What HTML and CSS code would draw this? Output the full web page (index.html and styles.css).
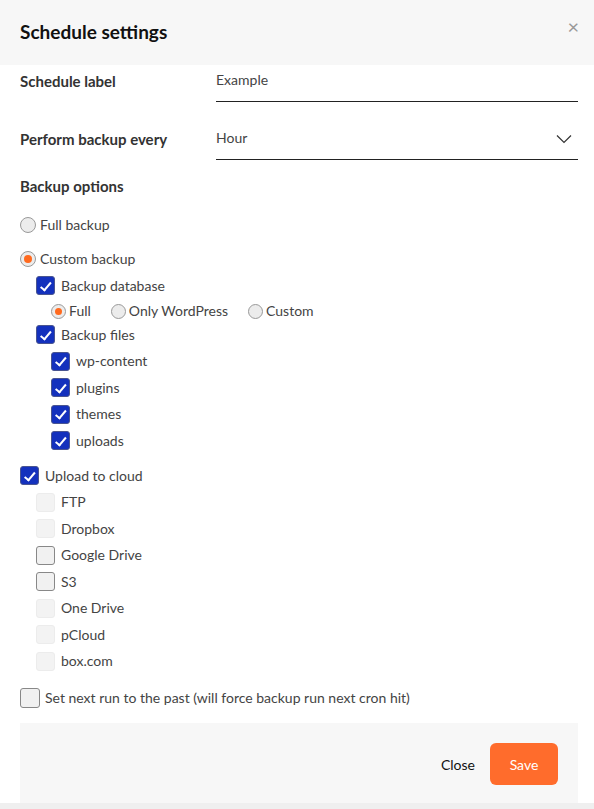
FILE: index.html
```html
<!DOCTYPE html>
<html>
<head>
<meta charset="utf-8">
<link rel="stylesheet" href="styles.css">
</head>
<body>
<div class="modal">
  <div class="header">
    <h1 class="title">Schedule settings</h1>
    <span class="close-x">&#215;</span>
  </div>
  <div class="body">
    <div class="field">
      <div class="field-label">Schedule label</div>
      <div class="field-input">Example</div>
    </div>
    <div class="field last">
      <div class="field-label">Perform backup every</div>
      <div class="field-input select">Hour
        <svg class="chev" width="16" height="10" viewBox="0 0 16 10"><path d="M1 1.5 L8 8.5 L15 1.5" fill="none" stroke="#333" stroke-width="1.2"/></svg>
      </div>
    </div>
    <div class="section-title">Backup options</div>

    <div class="opt lvl0 gap-top"><span class="radio"></span>Full backup</div>
    <div class="opt lvl0 gap-top2"><span class="radio on"></span>Custom backup</div>
    <div class="opt lvl1 tight"><span class="cb on"></span>Backup database</div>
    <div class="radio-row lvl2">
      <span class="ropt"><span class="radio small on"></span>Full</span>
      <span class="ropt"><span class="radio small"></span>Only WordPress</span>
      <span class="ropt"><span class="radio small"></span>Custom</span>
    </div>
    <div class="opt lvl1 tight2"><span class="cb on"></span>Backup files</div>
    <div class="opt lvl2 row"><span class="cb on"></span>wp-content</div>
    <div class="opt lvl2 row"><span class="cb on"></span>plugins</div>
    <div class="opt lvl2 row"><span class="cb on"></span>themes</div>
    <div class="opt lvl2 row"><span class="cb on"></span>uploads</div>

    <div class="opt lvl0 cloud"><span class="cb on"></span>Upload to cloud</div>
    <div class="opt lvl1 row"><span class="cb dis"></span>FTP</div>
    <div class="opt lvl1 row"><span class="cb dis"></span>Dropbox</div>
    <div class="opt lvl1 row"><span class="cb"></span>Google Drive</div>
    <div class="opt lvl1 row"><span class="cb"></span>S3</div>
    <div class="opt lvl1 row"><span class="cb dis"></span>One Drive</div>
    <div class="opt lvl1 row"><span class="cb dis"></span>pCloud</div>
    <div class="opt lvl1 row"><span class="cb dis"></span>box.com</div>

    <div class="opt lvl0 past"><span class="cb big"></span>Set next run to the past (will force backup run next cron hit)</div>

    <div class="footer">
      <span class="btn-close">Close</span>
      <span class="btn-save">Save</span>
    </div>
  </div>
</div>
<div class="bottom-strip"></div>
</body>
</html>
```
FILE: styles.css
```css
* { box-sizing: border-box; }
html, body { margin: 0; padding: 0; }
body {
  font-family: "Lato", "Liberation Sans", sans-serif;
  color: #444;
  background: #fff;
  width: 594px;
  height: 809px;
  overflow: hidden;
  display: flex;
  flex-direction: column;
}
.modal { background: #fff; height: 803px; }
.header {
  background: #f7f7f7;
  height: 65px;
  display: flex;
  align-items: flex-start;
  justify-content: space-between;
  padding: 0 15px 0 20px;
}
.title {
  margin: 20px 0 0;
  font-size: 19px;
  font-weight: 700;
  color: #111;
  line-height: 24px;
}
.close-x {
  margin-top: 14px;
  font-size: 20px;
  color: #999;
  line-height: 24px;
}
.body { padding: 0 16px 0 20px; }
.field {
  display: flex;
  align-items: flex-start;
  height: 58px;
}
.field.last { height: 42px; }
.field-label {
  width: 196px;
  font-size: 15px;
  font-weight: 700;
  color: #333;
  padding-top: 7px;
  line-height: 18px;
}
.field-input {
  flex: 1;
  font-size: 14px;
  color: #444;
  line-height: 18px;
  padding-top: 6px;
  height: 37px;
  border-bottom: 1px solid #222;
  position: relative;
}
.chev { position: absolute; right: 6px; top: 11px; }
.section-title {
  margin-top: 12px;
  font-size: 15px;
  font-weight: 700;
  color: #333;
  line-height: 18px;
}
.opt {
  display: flex;
  align-items: center;
  font-size: 14px;
  line-height: 18px;
  color: #444;
}
.lvl0 { padding-left: 0; }
.lvl1 { padding-left: 16px; }
.lvl2 { padding-left: 31px; }
.gap-top { margin-top: 21px; }
.gap-top2 { margin-top: 16px; }
.tight { margin-top: 8px; }
.tight2 { margin-top: 5px; }
.row { margin-top: 7.5px; }
.cloud { margin-top: 16px; }
.past { margin-top: 17px; }
.radio {
  width: 16px; height: 16px;
  border-radius: 50%;
  border: 1px solid #999;
  background: #ececec;
  margin-right: 4px;
  display: inline-flex;
  align-items: center;
  justify-content: center;
  flex-shrink: 0;
}
.radio.on::after {
  content: "";
  width: 8px; height: 8px;
  border-radius: 50%;
  background: #ff6a1f;
}
.radio.small { width: 15px; height: 15px; margin-right: 3px; }
.radio.small.on::after { width: 7px; height: 7px; }
.radio-row {
  display: flex;
  align-items: center;
  margin-top: 7px;
  font-size: 14px;
  line-height: 18px;
}
.ropt { display: inline-flex; align-items: center; margin-right: 20px; }
.cb {
  width: 19px; height: 19px;
  border-radius: 3px;
  border: 1px solid #888;
  background: #f1f1f1;
  margin-right: 6px;
  flex-shrink: 0;
  position: relative;
}
.cb.dis { border-color: #ececec; background: #f3f3f3; }
.cb.on { background: #1431bd; border-color: #4a5590; }
.cb.on::after {
  content: "";
  position: absolute;
  left: 6px; top: 2.5px;
  width: 4px; height: 8.5px;
  border-right: 2px solid #fff;
  border-bottom: 2px solid #fff;
  transform: rotate(40deg);
}
.cb.big { width: 20px; height: 20px; margin-right: 5px; }
.footer {
  margin-top: 15px;
  width: 558px;
  height: 81px;
  background: #f7f7f7;
  display: flex;
  align-items: center;
  justify-content: flex-end;
  padding-right: 20px;
  padding-top: 2px;
}
.btn-close {
  font-size: 14px;
  color: #111;
  margin-right: 15px;
}
.btn-save {
  background: #ff6c2c;
  color: #fff;
  font-size: 14px;
  width: 68px;
  height: 42px;
  border-radius: 6px;
  display: flex;
  align-items: center;
  justify-content: center;
}
.bottom-strip { height: 6px; background: #efefef; }
```
